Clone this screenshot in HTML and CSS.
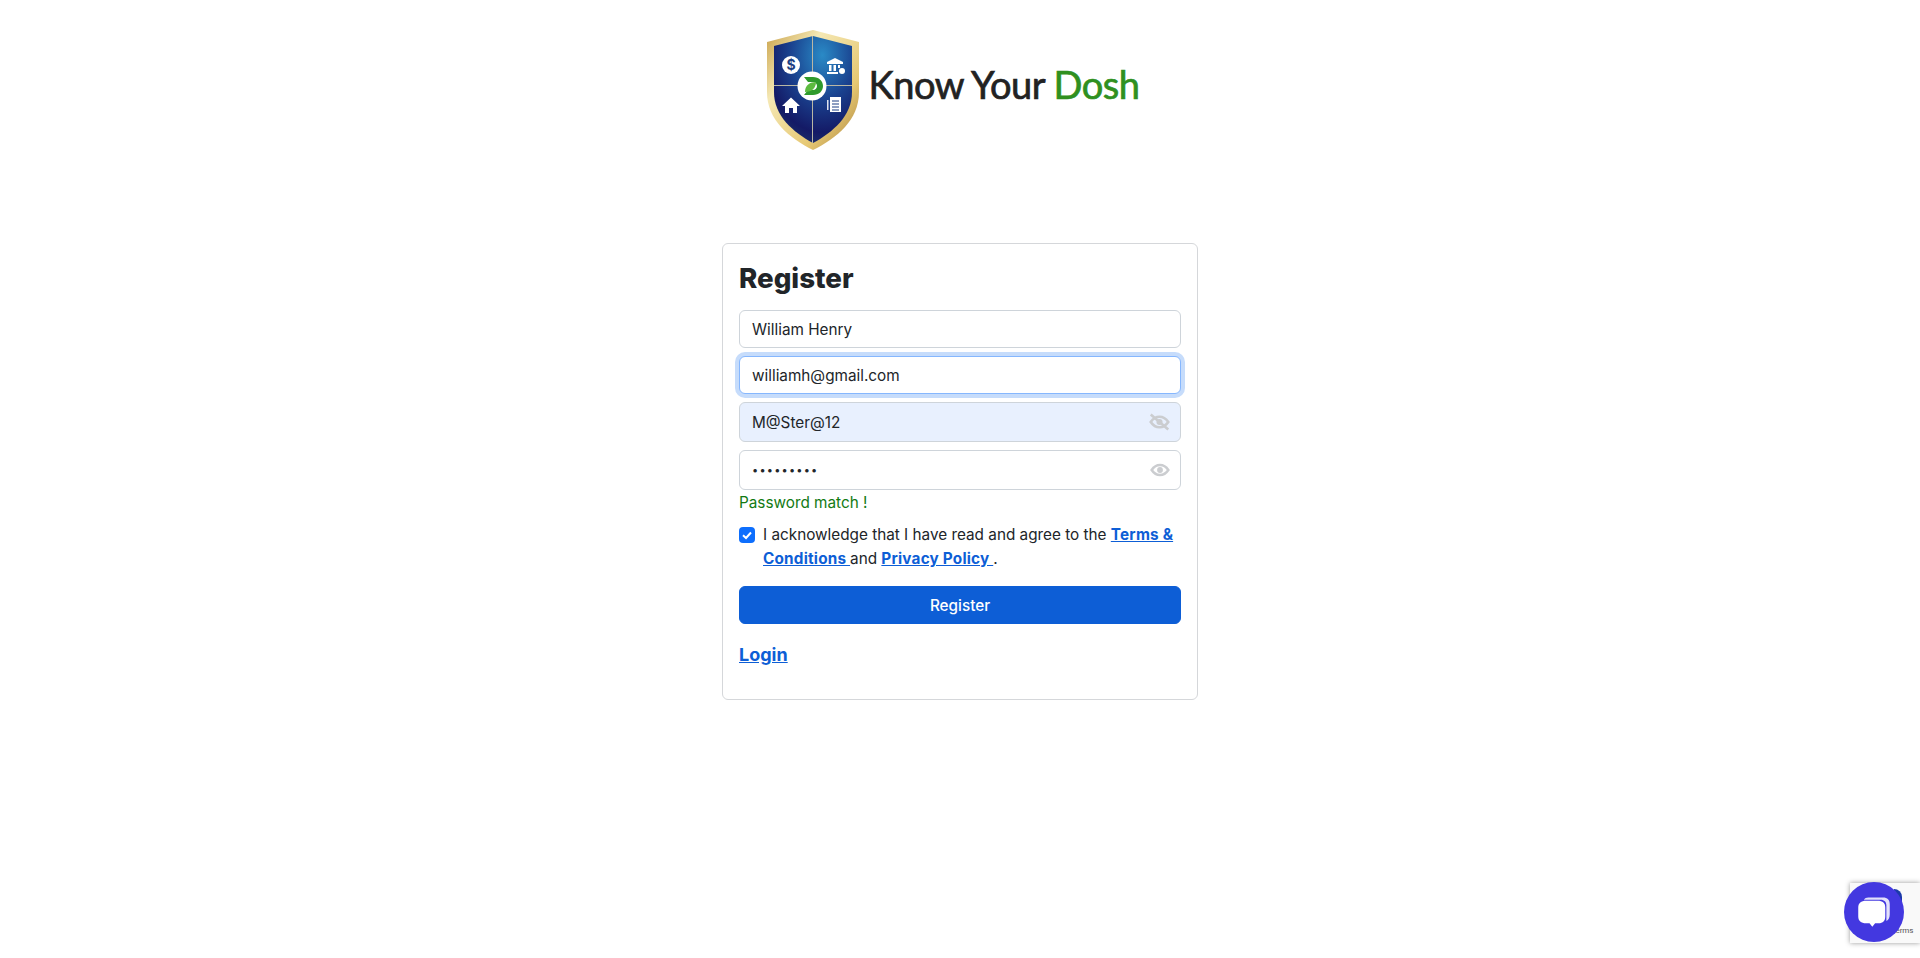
FILE: index.html
```html
<!DOCTYPE html>
<html lang="en">
<head>
    <meta charset="UTF-8">
    <meta name="viewport" content="width=device-width, initial-scale=1.0">
    <title>Register - Know Your Dosh</title>
    <link rel="stylesheet" href="styles.css">
</head>
<body>
    <header class="brand">
        <svg class="shield" viewBox="0 0 92 120" width="92" height="120" aria-hidden="true">
            <defs>
                <linearGradient id="gold" x1="0" y1="0" x2="1" y2="1">
                    <stop offset="0" stop-color="#c9a24a"/>
                    <stop offset="0.3" stop-color="#f5e8b4"/>
                    <stop offset="0.7" stop-color="#e6c873"/>
                    <stop offset="1" stop-color="#a9803a"/>
                </linearGradient>
                <radialGradient id="blue" cx="0.62" cy="0.18" r="0.9">
                    <stop offset="0" stop-color="#2a8ac6"/>
                    <stop offset="0.45" stop-color="#1a4390"/>
                    <stop offset="0.8" stop-color="#141a66"/>
                    <stop offset="1" stop-color="#1c3468"/>
                </radialGradient>
            </defs>
            <path d="M46 0 L92 12 L92 62 C92 90 70 108 46 120 C22 108 0 90 0 62 L0 12 Z" fill="url(#gold)"/>
            <path d="M46 6 L85 16 L85 62 C85 86 66 102 46 113 C26 102 7 86 7 62 L7 16 Z" fill="url(#blue)"/>
            <path d="M45.500 6 V113 M7 55.500 H85" stroke="#b9b7a4" stroke-width="1" fill="none"/>
            <circle cx="24" cy="35" r="9" fill="#fff"/>
            <text class="dollar" x="24" y="40" text-anchor="middle">$</text>
            <path d="M68 28 L76 32 V34 H60 V32 Z M62 35 H64.500 V41 H62 Z M66.500 35 H69 V41 H66.500 Z M71 35 H73 V38 H71 Z M60 42 H71 V44 H60 Z" fill="#fff"/>
            <circle cx="75" cy="41" r="3" fill="#fff"/>
            <path d="M24 67.500 L33 76 H30 V83 H26 V78 H22 V83 H18 V76 H15 Z" fill="#fff"/>
            <path d="M63 67 H74 V82 H63 Z" fill="#fff"/>
            <path d="M60.800 70 V80" stroke="#fff" stroke-width="1.300"/>
            <path d="M65 71 H72 M65 74 H72 M65 77 H72 M65 80 H72" stroke="#1d3f83" stroke-width="1"/>
            <circle cx="45" cy="56" r="14.500" fill="#fff"/>
            <path d="M37 47 H46 C52 47 56 51 56 56 C56 61 52 65 46 65 H37 L41 60 H46 C48.500 60 50 58 50 56 C50 54 48.500 52 46 52 H41 Z" fill="#2f9a2c"/>
            <path d="M38 62 C38 55 43 52 49 52 C49 58 45 62 38 62 Z" fill="#5dbb3f"/>
        </svg>
        <div class="brand-name">Know Your <span class="brand-accent">Dosh</span></div>
    </header>

    <main class="card">
        <h1 class="card-title">Register</h1>
        <form class="register-form">
            <input class="field" type="text" value="William Henry">
            <input class="field field-focus" type="text" value="williamh@gmail.com">

            <div class="field-wrap">
                <input class="field field-tall field-autofill" type="text" value="M@Ster@12">
                <svg class="eye" viewBox="0 0 24 24" width="21" height="21" aria-hidden="true">
                    <path d="M2 12 C5 7.500 8.500 6 12 6 C15.500 6 19 7.500 22 12 C19 16.500 15.500 18 12 18 C8.500 18 5 16.500 2 12 Z" fill="none" stroke="currentColor" stroke-width="3"/>
                    <circle cx="12" cy="12" r="3.500" fill="currentColor"/>
                    <path d="M2 3.500 L22 20.500" stroke="currentColor" stroke-width="3"/>
                </svg>
            </div>

            <div class="field-wrap">
                <input class="field field-tall field-secret" type="password" value="M@Ster@12">
                <svg class="eye" viewBox="0 0 24 24" width="20" height="20" aria-hidden="true">
                    <path d="M2 12 C5 7.500 8.500 6 12 6 C15.500 6 19 7.500 22 12 C19 16.500 15.500 18 12 18 C8.500 18 5 16.500 2 12 Z" fill="none" stroke="currentColor" stroke-width="3"/>
                    <circle cx="12" cy="12" r="3.500" fill="currentColor"/>
                </svg>
            </div>

            <div class="match-note">Password match !</div>

            <label class="terms">
                <span class="tick">
                    <svg viewBox="0 0 16 16" width="16" height="16" aria-hidden="true">
                        <path d="M4 8.300 L7 11 L12 5.500" fill="none" stroke="#fff" stroke-width="2"/>
                    </svg>
                </span>
                <span>I acknowledge that I have read and agree to the <a class="link" href="#">Terms &amp; Conditions </a> and <a class="link" href="#">Privacy Policy </a>.</span>
            </label>

            <button class="submit" type="button">Register</button>
        </form>
        <a class="login-link" href="#">Login</a>
    </main>

    <div class="recaptcha">
        <span class="recaptcha-logo"></span>
        <span class="recaptcha-terms">Terms</span>
    </div>
    <div class="chat-button">
        <svg viewBox="0 0 32 32" width="36" height="36" aria-hidden="true">
            <path d="M11 3 H24 C28 3 30 5 30 9 V18 C30 21 29 23 27 24 V10 C27 7 25 5 22 5 H7 C8 3.800 9 3 11 3 Z" fill="#fff" opacity="0.85"/>
            <path d="M9 6 H19 C24 6 26 8 26 12 V20 C26 24 24 26 20 26 H17 L14.500 29 L12 26 H9 C4.500 26 2 24 2 20 V12 C2 8 4.500 6 9 6 Z" fill="#fff"/>
        </svg>
    </div>
</body>
</html>
```

FILE: styles.css
```css
* {
    box-sizing: border-box;
}
body {
    margin: 0;
    height: 958px;
    overflow: hidden;
    position: relative;
    background-color: #fff;
    color: #212529;
    font-family: Inter, "Liberation Sans", sans-serif;
    font-size: 15.3px;
    line-height: 24px;
}
.brand {
    display: flex;
    align-items: center;
    justify-content: center;
    gap: 10px;
    height: 120px;
    margin: 30px 0 93px;
    padding-right: 14px;
}
.brand-name {
    font-family: Lato, "Noto Sans", sans-serif;
    font-size: 38px;
    font-weight: 400;
    line-height: 48px;
    letter-spacing: -0.5px;
    color: #222;
    -webkit-text-stroke: 0.7px currentColor;
    margin-top: -13px;
}
.brand-accent {
    color: #2f9020;
}
.dollar {
    font-family: Inter, sans-serif;
    font-size: 14px;
    font-weight: 700;
    fill: #1d3f83;
}
.card {
    width: 476px;
    height: 457px;
    margin: 0 auto;
    padding: 16px;
    border: 1px solid #d5d7da;
    border-radius: 6px;
}
.card-title {
    margin: 1px 0 14px;
    font-size: 27.7px;
    font-weight: 800;
    line-height: 35px;
}
.register-form {
    display: flex;
    flex-direction: column;
    gap: 8px;
}
.field-wrap {
    position: relative;
}
.field {
    display: block;
    width: 100%;
    height: 38px;
    padding: 6px 12px;
    border: 1px solid #ced4da;
    border-radius: 6px;
    background-color: #fff;
    color: #212529;
    font-family: inherit;
    font-size: 15.3px;
    outline: none;
}
.field-focus {
    border-color: #86b7fe;
    box-shadow: 0 0 0 4px #c6dcfb;
}
.field-tall {
    height: 40px;
}
.field-autofill {
    background-color: #e8f0fe;
}
.field-secret {
    font-size: 11px;
    letter-spacing: 1.2px;
}
.eye {
    position: absolute;
    top: 50%;
    right: 11px;
    transform: translateY(-50%);
    color: #cbcdd0;
}
.match-note {
    margin-top: -7px;
    color: #137a13;
}
.terms {
    display: flex;
    align-items: flex-start;
    gap: 8px;
}
.tick {
    flex: none;
    width: 16px;
    height: 16px;
    margin-top: 4px;
    border-radius: 4px;
    background-color: #0d6efd;
}
.tick svg {
    display: block;
}
.link,
.login-link {
    color: #0d5ed6;
    font-weight: 700;
    text-decoration: underline;
    letter-spacing: 0.2px;
}
.submit {
    height: 38px;
    margin-top: 7px;
    border: 1px solid #0d5ed6;
    border-radius: 6px;
    background-color: #0d5ed6;
    color: #fff;
    font-family: inherit;
    font-size: 15.3px;
    font-weight: 500;
}
.login-link {
    display: inline-block;
    margin-top: 19px;
    font-size: 18px;
    letter-spacing: 0;
}
.recaptcha {
    position: absolute;
    left: 1850px;
    top: 883px;
    width: 70px;
    height: 60px;
    background-color: #f9f9f9;
    box-shadow: 0 0 5px #999;
}
.recaptcha-logo {
    position: absolute;
    left: 44px;
    top: 6px;
    width: 8px;
    height: 22px;
    border-radius: 0 8px 8px 0;
    background-color: #1c3aa9;
}
.recaptcha-terms {
    position: absolute;
    left: 41px;
    top: 43px;
    font-family: Roboto, sans-serif;
    font-size: 8px;
    line-height: 10px;
    color: #555;
}
.chat-button {
    position: absolute;
    left: 1844px;
    top: 882px;
    display: flex;
    align-items: center;
    justify-content: center;
    width: 60px;
    height: 60px;
    border-radius: 50%;
    background-color: #4338e0;
}
```
